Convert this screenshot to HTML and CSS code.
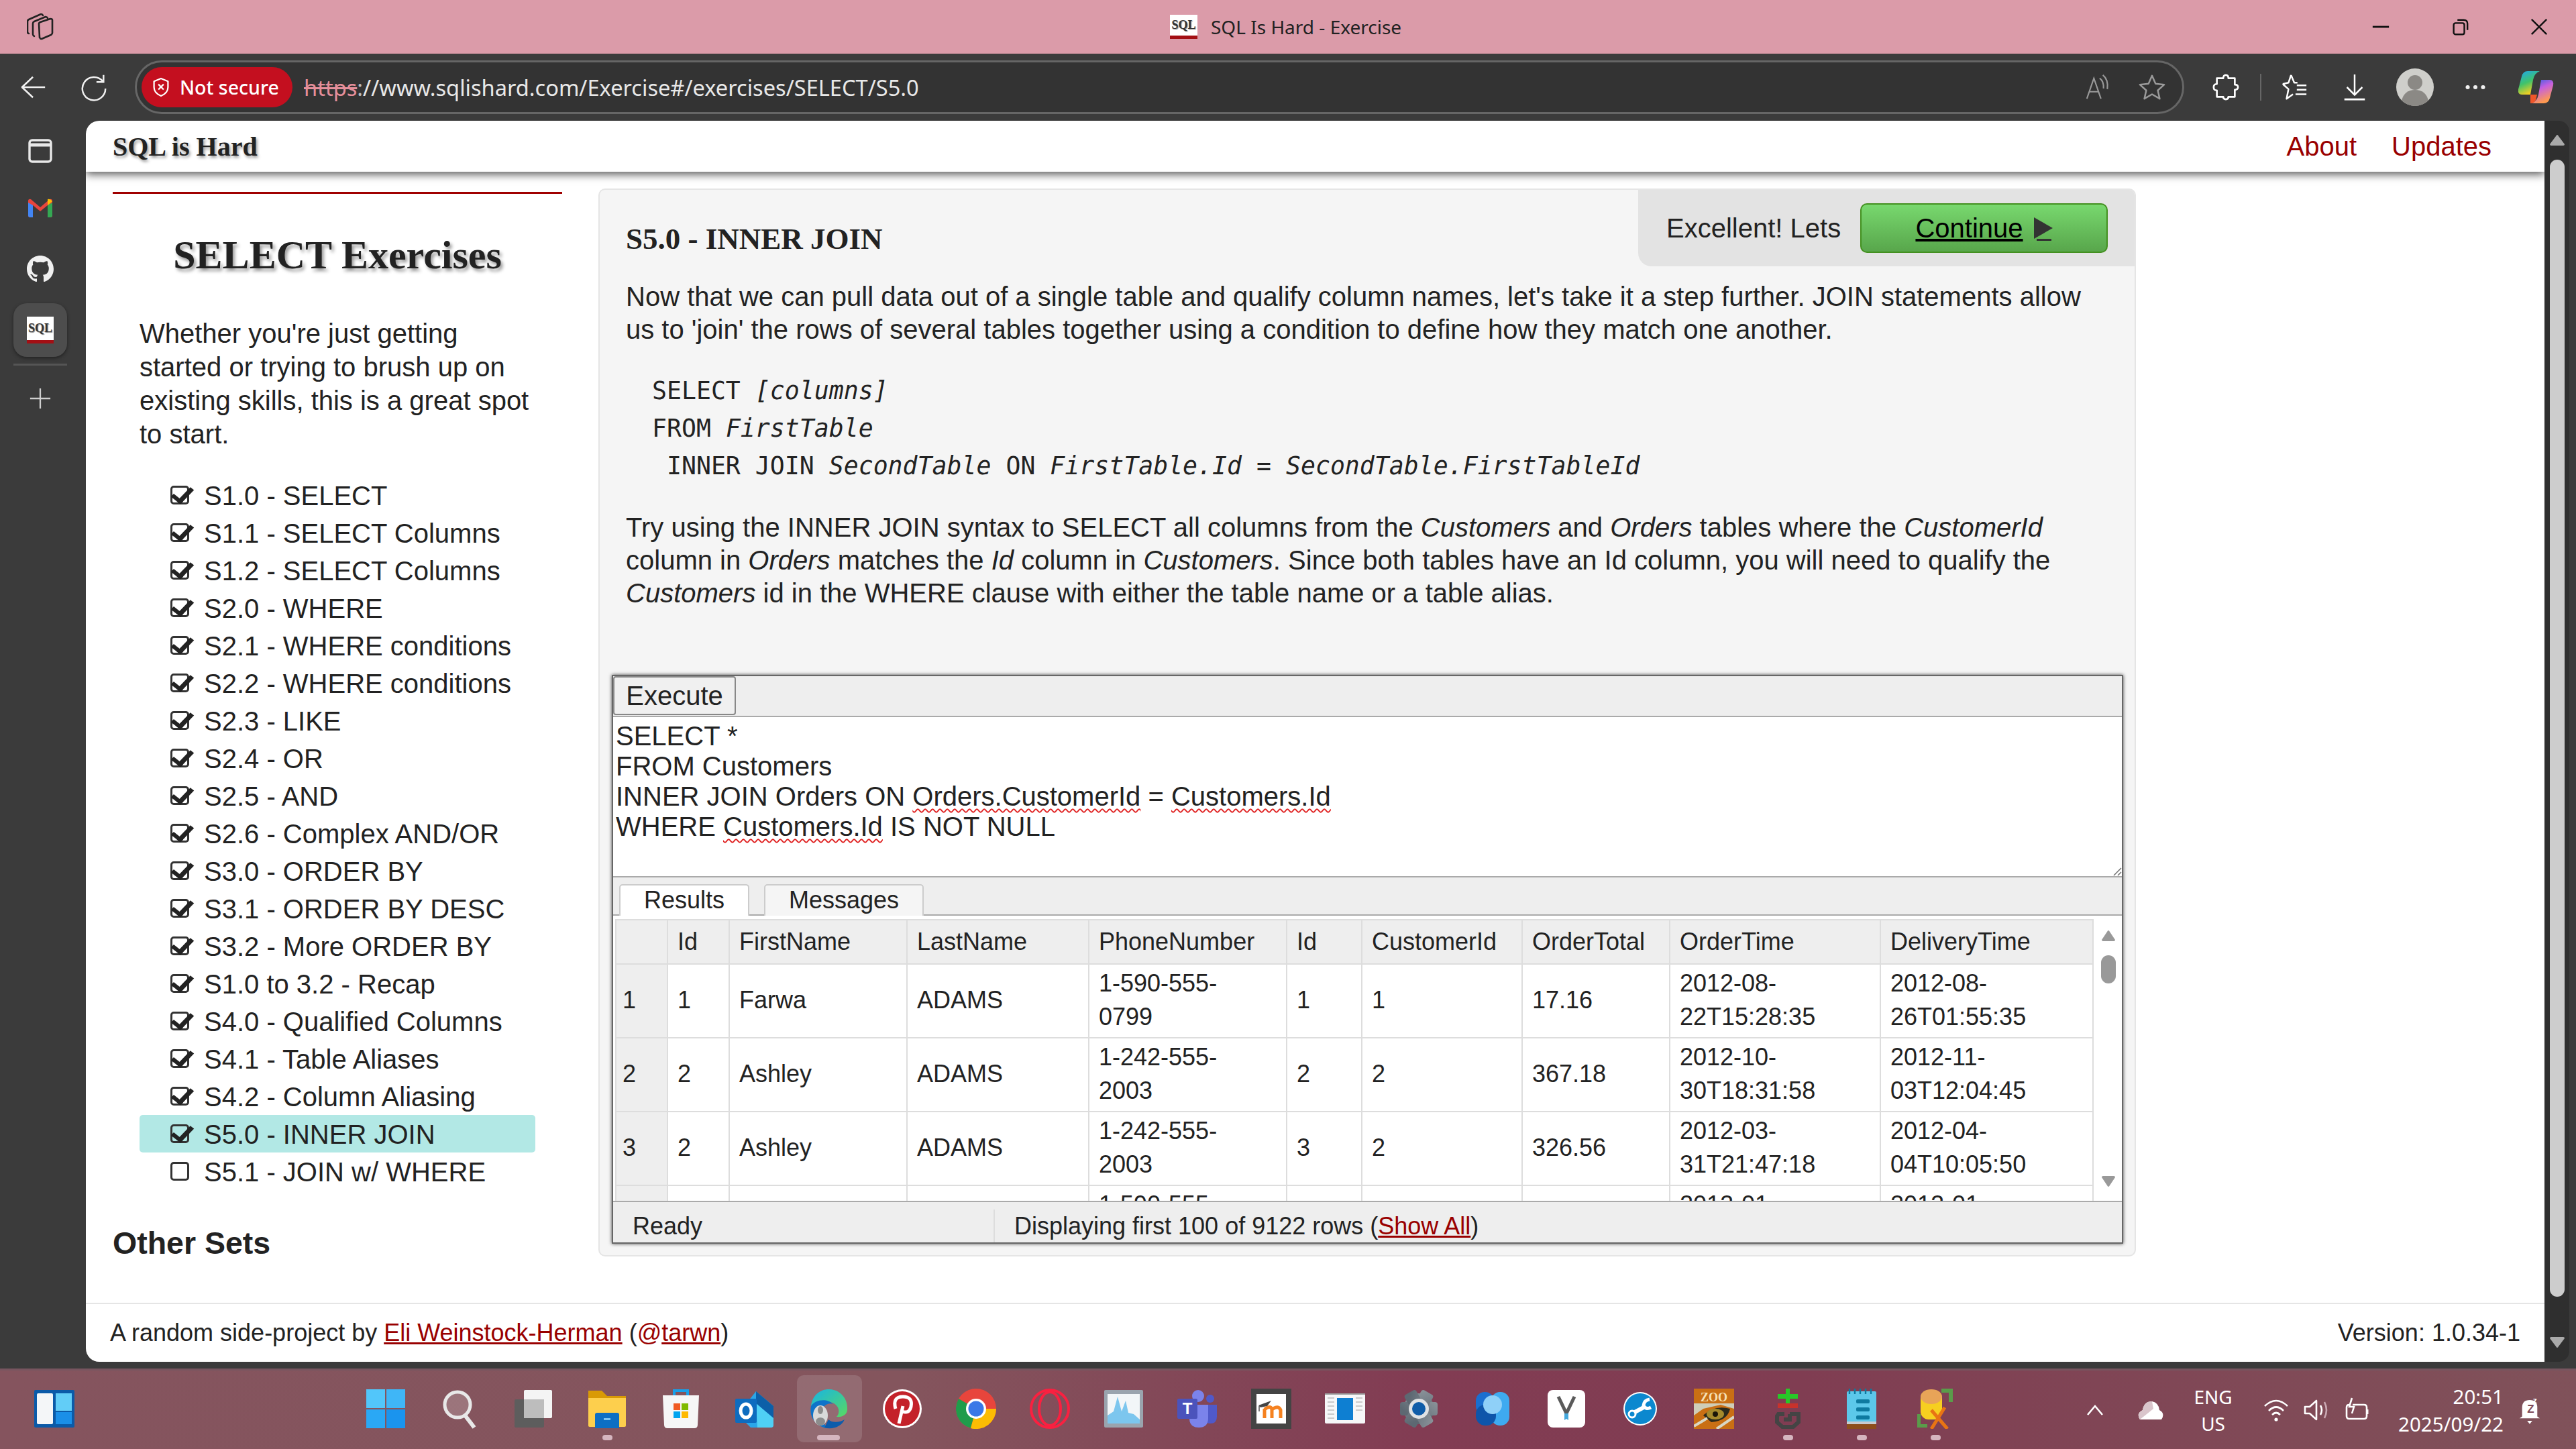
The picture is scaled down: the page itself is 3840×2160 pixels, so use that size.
FILE: index.html

```html
<!DOCTYPE html>
<html lang="en">
<head>
  <meta charset="UTF-8" />
  <title>SQL Is Hard - Exercise</title>
  <link rel="stylesheet" href="styles.css">
</head>
<body>
  <!-- browser title bar -->
  <div class="titlebar">
    <svg class="workspaces" viewBox="0 0 40 40" fill="none" stroke="#222" stroke-width="2.6" stroke-linejoin="round" stroke-linecap="round">
      <path d="M3 30 Q1 30 1 27 V12 Q1 10 3 9 L21 1 Q23 1 24 3"/>
      <path d="M11 34 Q9 33 9 31 V15 Q9 13 11 12 L28 5 Q30 5 31 7"/>
      <path d="M18 15 Q18 14 20 13 L35 8 Q38 8 38 10 V29 Q38 31 36 32 L22 38 Q20 38 19 36 Z"/>
    </svg>
    <div class="title-center">
      <div class="favicon"><span>SQL</span></div>
      <span class="title-text">SQL Is Hard - Exercise</span>
    </div>
    <div class="window-controls">
      <svg viewBox="0 0 30 30"><path d="M2 15 H28" stroke="#111" stroke-width="3"/></svg>
      <svg viewBox="0 0 30 30" fill="none" stroke="#111" stroke-width="2.6"><rect x="5" y="9" width="17" height="18" rx="3"/><path d="M11 4 H21 Q27 4 27 10 V20"/></svg>
      <svg viewBox="0 0 30 30"><path d="M3 3 L27 27 M27 3 L3 27" stroke="#111" stroke-width="2.6"/></svg>
    </div>
  </div>

  <!-- browser toolbar -->
  <div class="toolbar">
    <div class="tool">
      <svg viewBox="0 0 44 44" fill="none" stroke="#f0f0f0" stroke-width="2.6" stroke-linejoin="round"><path d="M40 22 H5 M21 6 L4 22 L21 38"/></svg>
    </div>
    <div class="tool">
      <svg viewBox="0 0 44 44" fill="none" stroke="#f0f0f0" stroke-width="2.6"><path d="M36 13 A18 18 0 1 0 40 24"/><path d="M37 3 V14 H26"/></svg>
    </div>
    <div class="address">
      <div class="not-secure">
        <svg viewBox="0 0 30 34" fill="none" stroke="#fff" stroke-width="2.6" stroke-linejoin="round"><path d="M15 2 L27 7 V17 Q27 27 15 32 Q3 27 3 17 V7 Z"/><path d="M10.5 12 L19.5 21 M19.5 12 L10.5 21"/></svg>
        <span>Not secure</span>
      </div>
      <div class="url"><s>https</s><span class="url-sep">:</span>//www.sqlishard.com/Exercise#/exercises/SELECT/S5.0</div>
      <div class="address-icons">
        <svg viewBox="0 0 44 44" fill="none" stroke="#9a9a9a" stroke-width="2.2"><path d="M4 40 L15 8 L26 40 M8 29 H22"/><path d="M24 8 Q31 13 30 24 M29 3 Q38 10 36 25"/></svg>
        <svg viewBox="0 0 44 44" fill="none" stroke="#9a9a9a" stroke-width="2.6" stroke-linejoin="round"><path d="M22 4 L27.5 16.5 L41 18 L31 27 L34 40 L22 33 L10 40 L13 27 L3 18 L16.5 16.5 Z"/></svg>
      </div>
    </div>
    <div class="tool">
      <svg viewBox="0 0 44 44" fill="none" stroke="#fff" stroke-width="2.8" stroke-linejoin="round"><path d="M18 8 Q18 3 22 3 Q26 3 26 8 H36 V18 Q41 18 41 22 Q41 26 36 26 V37 H26 Q26 41 22 41 Q18 41 18 37 H8 V27 Q3 27 3 22 Q3 17 8 17 V8 Z"/></svg>
    </div>
    <div class="tool-sep"></div>
    <div class="tool">
      <svg viewBox="0 0 44 44" fill="none" stroke="#fff" stroke-width="2.6" stroke-linejoin="round"><path d="M17 3 L22 15 L27 15 M4 17 L13 25 L10 40 L20 33"/><path d="M17 3 L13 15 L4 17"/><path d="M26 19 H41 M26 26 H41 M24 33 H41"/></svg>
    </div>
    <div class="tool">
      <svg viewBox="0 0 44 44" fill="none" stroke="#fff" stroke-width="2.6"><path d="M22 2 V34 M10 22 L22 34 L34 22"/><path d="M6 41 H38" stroke-width="3"/></svg>
    </div>
    <div class="tool">
      <svg class="avatar" viewBox="0 0 56 56"><circle cx="28" cy="28" r="28" fill="#cfcfcb"/><circle cx="28" cy="21" r="11" fill="#8b8985"/><path d="M8 48 Q12 32 28 32 Q44 32 48 48 Q38 56 28 56 Q18 56 8 48 Z" fill="#8b8985"/></svg>
    </div>
    <div class="tool">
      <svg viewBox="0 0 44 44" fill="#f0f0f0"><circle cx="10" cy="22" r="3.2"/><circle cx="22" cy="22" r="3.2"/><circle cx="34" cy="22" r="3.2"/></svg>
    </div>
    <div class="tool">
      <svg class="copilot" viewBox="0 0 56 50">
        <defs>
          <linearGradient id="copA" x1="0" y1="0" x2="0.4" y2="1"><stop offset="0" stop-color="#1fa6f0"/><stop offset="0.55" stop-color="#3fc36a"/><stop offset="1" stop-color="#f4d020"/></linearGradient>
          <linearGradient id="copB" x1="0" y1="0" x2="0.4" y2="1"><stop offset="0" stop-color="#2a5fe0"/><stop offset="0.45" stop-color="#c45fe0"/><stop offset="1" stop-color="#ff9a50"/></linearGradient>
        </defs>
        <path d="M16 1 H34 Q26 4 24 14 L20 36 H7 Q1 36 2 28 L7 9 Q9 1 16 1 Z" fill="url(#copA)"/>
        <path d="M40 49 H22 Q30 46 32 36 L36 14 H49 Q55 14 54 22 L49 41 Q47 49 40 49 Z" fill="url(#copB)"/>
        <path d="M20 36 H30 L28 44 Q26 49 20 49 Q20 42 20 36 Z" fill="#f0562a"/>
      </svg>
    </div>
  </div>

  <div class="workspace">
    <!-- browser vertical strip -->
    <div class="strip">
      <svg class="strip-icon strip-tabs" viewBox="0 0 36 36" fill="none" stroke="#e8e8e8" stroke-width="3.4"><rect x="2" y="2" width="32" height="32" rx="4"/><path d="M2 9 H34" stroke-width="5"/></svg>
      <svg class="strip-icon strip-gmail" viewBox="0 0 36 28">
        <path d="M0 4 Q0 0 4 1 L18 13 L18 19 L7 10 V28 H3 Q0 28 0 25 Z" fill="#e8453c"/>
        <path d="M36 4 Q36 0 32 1 L18 13 V19 L29 10 V28 H33 Q36 28 36 25 Z" fill="#e8453c"/>
        <path d="M0 6 V25 Q0 28 3 28 H7 V10 Z" fill="#4285f4"/>
        <path d="M36 6 V25 Q36 28 33 28 H29 V10 Z" fill="#34a853"/>
        <path d="M29 1 Q33 0 36 4 L29 10 Z" fill="#fbbc04"/>
      </svg>
      <svg class="strip-icon strip-github" viewBox="0 0 16 16"><path fill="#f0f0f0" d="M8 0C3.58 0 0 3.58 0 8c0 3.54 2.29 6.53 5.47 7.59.4.07.55-.17.55-.38 0-.19-.01-.82-.01-1.49-2.01.37-2.53-.49-2.69-.94-.09-.23-.48-.94-.82-1.13-.28-.15-.68-.52-.01-.53.63-.01 1.08.58 1.23.82.72 1.21 1.87.87 2.33.66.07-.52.28-.87.51-1.07-1.78-.2-3.64-.89-3.64-3.95 0-.87.31-1.59.82-2.15-.08-.2-.36-1.02.08-2.12 0 0 .67-.21 2.2.82.64-.18 1.32-.27 2-.27s1.36.09 2 .27c1.53-1.04 2.2-.82 2.2-.82.44 1.1.16 1.92.08 2.12.51.56.82 1.27.82 2.15 0 3.07-1.87 3.75-3.65 3.95.29.25.54.73.54 1.48 0 1.07-.01 1.93-.01 2.2 0 .21.15.46.55.38A8.01 8.01 0 0 0 16 8c0-4.42-3.58-8-8-8z"/></svg>
      <div class="strip-active"><div class="favicon favicon-large"><span>SQL</span></div></div>
      <div class="strip-line"></div>
      <svg class="strip-icon strip-plus" viewBox="0 0 36 36"><path d="M18 2 V34 M2 18 H34" stroke="#cfcfcf" stroke-width="2.4"/></svg>
    </div>

    <!-- the page itself -->
    <div class="page">
      <header class="page-header">
        <div class="brand">SQL is Hard</div>
        <nav class="nav">
          <a href="#">About</a>
          <a href="#">Updates</a>
        </nav>
      </header>

      <div class="layout">
        <aside class="side">
          <h2 class="side-title">SELECT Exercises</h2>
          <p class="side-text">Whether you're just getting started or trying to brush up on existing skills, this is a great spot to start.</p>
          <ul class="lessons">
            <li class="done">S1.0 - SELECT</li>
            <li class="done">S1.1 - SELECT Columns</li>
            <li class="done">S1.2 - SELECT Columns</li>
            <li class="done">S2.0 - WHERE</li>
            <li class="done">S2.1 - WHERE conditions</li>
            <li class="done">S2.2 - WHERE conditions</li>
            <li class="done">S2.3 - LIKE</li>
            <li class="done">S2.4 - OR</li>
            <li class="done">S2.5 - AND</li>
            <li class="done">S2.6 - Complex AND/OR</li>
            <li class="done">S3.0 - ORDER BY</li>
            <li class="done">S3.1 - ORDER BY DESC</li>
            <li class="done">S3.2 - More ORDER BY</li>
            <li class="done">S1.0 to 3.2 - Recap</li>
            <li class="done">S4.0 - Qualified Columns</li>
            <li class="done">S4.1 - Table Aliases</li>
            <li class="done">S4.2 - Column Aliasing</li>
            <li class="done current">S5.0 - INNER JOIN</li>
            <li>S5.1 - JOIN w/ WHERE</li>
          </ul>
          <h3 class="other-sets">Other Sets</h3>
        </aside>

        <main class="panel">
          <div class="next-box">
            <span class="next-text">Excellent! Lets</span>
            <a class="continue" href="#"><u>Continue</u> <span class="play"></span></a>
          </div>
          <h2 class="panel-title">S5.0 - INNER JOIN</h2>
          <p class="panel-text">Now that we can pull data out of a single table and qualify column names, let's take it a step further. JOIN statements allow us to 'join' the rows of several tables together using a condition to define how they match one another.</p>
          <pre class="code">SELECT <i>[columns]</i>
FROM <i>FirstTable</i>
 INNER JOIN <i>SecondTable</i> ON <i>FirstTable.Id</i> = <i>SecondTable.FirstTableId</i></pre>
          <p class="panel-text">Try using the INNER JOIN syntax to SELECT all columns from the <i>Customers</i> and <i>Orders</i> tables where the <i>CustomerId</i> column in <i>Orders</i> matches the <i>Id</i> column in <i>Customers</i>. Since both tables have an Id column, you will need to qualify the <i>Customers</i> id in the WHERE clause with either the table name or a table alias.</p>

          <div class="sql-box">
            <div class="sql-tools"><button class="execute">Execute</button></div>
            <div class="sql-editor">
              <div>SELECT *</div>
              <div>FROM Customers</div>
              <div>INNER JOIN Orders ON <span class="typo">Orders.CustomerId</span> = <span class="typo">Customers.Id</span></div>
              <div>WHERE <span class="typo">Customers.Id</span> IS NOT NULL</div>
              <svg class="resize" viewBox="0 0 14 14"><path d="M13 2 L2 13 M13 8 L8 13" stroke="#777" stroke-width="1.6"/></svg>
            </div>
            <div class="tabs">
              <div class="tab tab-active">Results</div>
              <div class="tab">Messages</div>
            </div>
            <div class="results">
              <table class="grid">
                <colgroup>
                  <col class="c-num"><col class="c-id"><col class="c-first"><col class="c-last"><col class="c-phone"><col class="c-oid"><col class="c-cust"><col class="c-total"><col class="c-otime"><col class="c-dtime">
                </colgroup>
                <thead>
                  <tr><th></th><th>Id</th><th>FirstName</th><th>LastName</th><th>PhoneNumber</th><th>Id</th><th>CustomerId</th><th>OrderTotal</th><th>OrderTime</th><th>DeliveryTime</th></tr>
                </thead>
                <tbody>
                  <tr><th>1</th><td>1</td><td>Farwa</td><td>ADAMS</td><td>1-590-555-<br>0799</td><td>1</td><td>1</td><td>17.16</td><td>2012-08-<br>22T15:28:35</td><td>2012-08-<br>26T01:55:35</td></tr>
                  <tr><th>2</th><td>2</td><td>Ashley</td><td>ADAMS</td><td>1-242-555-<br>2003</td><td>2</td><td>2</td><td>367.18</td><td>2012-10-<br>30T18:31:58</td><td>2012-11-<br>03T12:04:45</td></tr>
                  <tr><th>3</th><td>2</td><td>Ashley</td><td>ADAMS</td><td>1-242-555-<br>2003</td><td>3</td><td>2</td><td>326.56</td><td>2012-03-<br>31T21:47:18</td><td>2012-04-<br>04T10:05:50</td></tr>
                  <tr><th></th><td></td><td></td><td></td><td>1-590-555-<br>&nbsp;</td><td></td><td></td><td></td><td>2012-01-<br>&nbsp;</td><td>2012-01-<br>&nbsp;</td></tr>
                </tbody>
              </table>
              <div class="mini-scroll">
                <svg class="mini-arrow" viewBox="0 0 22 18"><path d="M11 1 Q12 1 13 3 L21 15 Q21 17 19 17 H3 Q1 17 1 15 L9 3 Q10 1 11 1 Z" fill="#999"/></svg>
                <div class="mini-thumb"></div>
                <svg class="mini-arrow mini-down" viewBox="0 0 22 18"><path d="M11 17 Q12 17 13 15 L21 3 Q21 1 19 1 H3 Q1 1 1 3 L9 15 Q10 17 11 17 Z" fill="#999"/></svg>
              </div>
            </div>
            <div class="status">
              <div class="status-left">Ready</div>
              <div class="status-right">Displaying first 100 of 9122 rows (<a href="#">Show All</a>)</div>
            </div>
          </div>
        </main>
      </div>

      <footer class="page-footer">
        <div>A random side-project by <a href="#">Eli Weinstock-Herman</a> (<a class="at" href="#"><span>@</span>tarwn</a>)</div>
        <div>Version: 1.0.34-1</div>
      </footer>
    </div>

    <!-- page scrollbar -->
    <div class="scrollbar">
      <svg class="scroll-arrow" viewBox="0 0 24 18"><path d="M12 1 Q13 1 14 3 L23 15 Q23 17 21 17 H3 Q1 17 1 15 L10 3 Q11 1 12 1 Z" fill="#aaa"/></svg>
      <div class="scroll-thumb"></div>
      <svg class="scroll-arrow scroll-down" viewBox="0 0 24 18"><path d="M12 17 Q13 17 14 15 L23 3 Q23 1 21 1 H3 Q1 1 1 3 L10 15 Q11 17 12 17 Z" fill="#aaa"/></svg>
    </div>
  </div>

  <!-- windows taskbar -->
  <div class="taskbar">
    <div class="task task-widgets">
      <svg viewBox="0 0 60 56"><rect width="60" height="56" rx="2" fill="#0b5aa8"/><rect x="4" y="5" width="24" height="46" rx="2" fill="#f4f6f8"/><rect x="32" y="5" width="24" height="26" fill="#62cdf7"/><rect x="32" y="33" width="24" height="18" fill="#1a8fe8"/></svg>
    </div>
    <div class="task-group">
      <div class="task"><svg viewBox="0 0 60 60"><rect x="1" y="1" width="28" height="28" fill="#52c6fa"/><rect x="31" y="1" width="28" height="28" fill="#3fb6f7"/><rect x="1" y="31" width="28" height="28" fill="#2aa8f5"/><rect x="31" y="31" width="28" height="28" fill="#1a94ee"/></svg></div>
      <div class="task"><svg viewBox="0 0 60 60"><circle cx="27" cy="24" r="19" fill="#ffffff30" stroke="#e8e8e8" stroke-width="5"/><path d="M39 41 L52 58" stroke="#e8e8e8" stroke-width="6"/></svg></div>
      <div class="task"><svg viewBox="0 0 60 60"><rect x="2" y="16" width="44" height="42" rx="2" fill="#5d5d5d"/><rect x="16" y="2" width="42" height="42" rx="2" fill="#f4f4f4"/><rect x="16" y="16" width="30" height="28" fill="#bdbdbd"/></svg></div>
      <div class="task running"><svg viewBox="0 0 60 60"><path d="M2 3 H22 L30 11 H58 V56 H2 Z" fill="#d99a05"/><path d="M2 14 H58 V55 Q58 57 56 57 H4 Q2 57 2 55 Z" fill="#fdcf4d"/><path d="M12 39 Q12 36 15 36 H45 Q48 36 48 39 V59 H12 Z" fill="#0d6fc4"/><rect x="25" y="44" width="10" height="3" fill="#7cc4f2"/></svg></div>
      <div class="task"><svg viewBox="0 0 60 60"><path d="M20 12 V3 H40 V12" fill="none" stroke="#18a0ea" stroke-width="4"/><path d="M3 10 H57 L55 54 Q55 59 50 59 H10 Q5 59 5 54 Z" fill="#f6f6f6"/><rect x="19" y="22" width="10" height="10" fill="#f05a22"/><rect x="31" y="22" width="10" height="10" fill="#7fba00"/><rect x="19" y="34" width="10" height="10" fill="#00a4ef"/><rect x="31" y="34" width="10" height="10" fill="#ffb900"/></svg></div>
      <div class="task"><svg viewBox="0 0 60 60"><path d="M32 4 L58 26 V54 Q58 58 54 58 H24 L16 50 V24 Z" fill="#2aa6e8"/><path d="M32 4 L58 26 V44 L32 22 Z" fill="#0c5fa8"/><path d="M32 22 L58 44 V54 Q58 58 54 58 H34 Z" fill="#4fd0f5"/><rect x="1" y="15" width="32" height="36" rx="2" fill="#0e6cbf"/><ellipse cx="17" cy="33" rx="8" ry="10" fill="none" stroke="#fff" stroke-width="5"/></svg></div>
      <div class="task task-active running-wide"><svg viewBox="0 0 60 60">
        <defs><linearGradient id="edgeA" x1="0.2" y1="0" x2="1" y2="0.8"><stop offset="0" stop-color="#1db8d8"/><stop offset="1" stop-color="#52d66e"/></linearGradient></defs>
        <path d="M4 26 C6 8 20 0 32 1 C48 2 59 15 58 31 C58 39 50 43 42 42 C48 36 46 25 36 21 C22 16 8 20 4 26 Z" fill="url(#edgeA)"/>
        <path d="M4 26 C10 16 28 14 37 23 C28 20 18 28 18 39 C18 48 24 56 33 59 C16 60 0 46 4 26 Z" fill="#0e73c9"/>
        <path d="M24 58 C36 62 50 56 54 46 C48 50 36 52 30 46 Z" fill="#0d5cab"/>
        <ellipse cx="18" cy="40" rx="11" ry="15" fill="#d9d9d9"/><ellipse cx="18" cy="32" rx="4" ry="6" fill="#8c8c8c"/><ellipse cx="18" cy="49" rx="7" ry="6" fill="#8c8c8c"/>
      </svg></div>
      <div class="task"><svg viewBox="0 0 60 60"><circle cx="30" cy="30" r="29" fill="#fff"/><circle cx="30" cy="30" r="26" fill="#c4222a"/><path d="M25 52 L31 26 M20 30 Q15 12 31 12 Q46 12 43 27 Q40 38 30 34" fill="none" stroke="#fff" stroke-width="5"/></svg></div>
      <div class="task"><svg viewBox="0 0 60 60"><circle cx="30" cy="30" r="30" fill="#e8453c"/><path d="M30 30 L4 15 A30 30 0 0 0 22 59 Z" fill="#1f9c4b"/><path d="M30 30 H60 A30 30 0 0 1 22 59 Z" fill="#fbbc04"/><circle cx="30" cy="30" r="15" fill="#fff"/><circle cx="30" cy="30" r="11.5" fill="#3a78e7"/></svg></div>
      <div class="task"><svg viewBox="0 0 60 60" fill="none" stroke="#fa2040" stroke-width="4"><ellipse cx="30" cy="30" rx="28" ry="28"/><ellipse cx="30" cy="30" rx="16" ry="25"/></svg></div>
      <div class="task"><svg viewBox="0 0 60 60"><rect x="1" y="2" width="58" height="56" rx="2" fill="#9aa4ae"/><rect x="6" y="8" width="48" height="44" fill="#f2f6f8"/><path d="M6 52 V40 L15 34 L21 12 L27 34 L33 18 L37 36 L45 38 L54 46 V52 Z" fill="#7cc6ee"/></svg></div>
      <!-- teams -->
      <div class="task"><svg viewBox="0 0 60 60"><circle cx="31" cy="11" r="9" fill="#7b83eb"/><circle cx="49" cy="15" r="6" fill="#5059c9"/><path d="M40 24 H59 V42 Q59 52 49 52 Q40 52 40 42 Z" fill="#5059c9"/><path d="M18 24 H46 V44 Q46 58 32 58 Q18 58 18 44 Z" fill="#7b83eb"/><rect y="15" width="30" height="30" rx="2" fill="#4b53bc"/><text class="teams-t" x="15" y="38">T</text></svg></div>
      <!-- moodle style tile -->
      <div class="task"><svg viewBox="0 0 60 60"><rect width="60" height="60" fill="#444"/><rect x="8" y="8" width="44" height="44" fill="#fff"/><path d="M20 44 V30 M20 31 Q29 24 31 31 V44 M31 31 Q41 24 44 32 V44" fill="none" stroke="#f58220" stroke-width="5"/><path d="M11 25 L30 18 L24 26 L14 28 Z" fill="#444"/><path d="M12 26 V34" stroke="#444" stroke-width="1.4"/></svg></div>
      <!-- blue window -->
      <div class="task"><svg viewBox="0 0 60 60"><rect y="7" width="60" height="45" rx="2" fill="#f6f7f8"/><rect y="7" width="60" height="2" fill="#9a9a9a"/><rect x="18" y="14" width="24" height="33" fill="#0e7fd2"/><path d="M4 14 H14 M4 20 H14 M4 26 H14 M4 32 H14 M4 38 H14 M4 44 H14 M46 14 H56 M46 20 H56 M46 26 H56 M46 32 H56" stroke="#bcbcbc" stroke-width="1.4"/></svg></div>
      <!-- settings gear -->
      <div class="task"><svg viewBox="0 0 60 60">
        <defs><linearGradient id="gearG" x1="0" y1="0" x2="0.4" y2="1"><stop offset="0" stop-color="#8b939a"/><stop offset="1" stop-color="#5d6872"/></linearGradient></defs>
        <g fill="url(#gearG)"><circle cx="30" cy="30" r="23"/><rect x="20" y="2" width="20" height="56" rx="4" transform="rotate(90 30 30)"/><rect x="20" y="2" width="20" height="56" rx="4" transform="rotate(30 30 30)"/><rect x="20" y="2" width="20" height="56" rx="4" transform="rotate(150 30 30)"/></g>
        <circle cx="30" cy="30" r="15" fill="#e0e2e4"/><circle cx="30" cy="30" r="10" fill="#0f5ca8"/>
      </svg></div>
      <!-- blue lobes -->
      <div class="task"><svg viewBox="0 0 60 60"><rect x="5" y="5" width="27" height="34" rx="13" fill="#1a6fd0"/><rect x="28" y="5" width="27" height="50" rx="13" fill="#3eaaf0"/><rect x="5" y="24" width="30" height="31" rx="14" fill="#0e55aa"/><circle cx="30" cy="24" r="14" fill="#8fd0f8"/></svg></div>
      <!-- V tile -->
      <div class="task"><svg viewBox="0 0 60 60"><rect x="2" y="2" width="56" height="56" rx="8" fill="#fff"/><path d="M18 12 L30 37 L42 12" fill="none" stroke="#5a5a5a" stroke-width="5"/><path d="M27 37 H33 V47 L30 45 L27 47 Z" fill="#45a8dc"/></svg></div>
      <!-- wrench -->
      <div class="task"><svg viewBox="0 0 60 60"><circle cx="30" cy="30" r="25" fill="#fff"/><circle cx="30" cy="30" r="23" fill="#0b88cf"/><circle cx="18" cy="38" r="5" fill="none" stroke="#fff" stroke-width="3"/><path d="M22 35 L37 27" stroke="#fff" stroke-width="6"/><path d="M44 16 Q36 17 35 25 Q38 32 46 28" fill="none" stroke="#fff" stroke-width="5"/></svg></div>
      <!-- zoo -->
      <div class="task"><svg viewBox="0 0 60 60"><rect width="60" height="60" fill="#c96f14"/><path d="M0 22 H60 V30 L40 24 L14 30 L0 40 Z" fill="#cfcdb8"/><path d="M14 40 Q30 24 54 30 Q50 48 26 50 Z" fill="#2b2a1c"/><ellipse cx="32" cy="38" rx="13" ry="8" fill="#a58a2c"/><circle cx="32" cy="38" r="4" fill="#1a1608"/><path d="M0 56 L20 44 M34 60 L60 42" stroke="#d8d6c4" stroke-width="4"/><text class="zoo" x="30" y="19">ZOO</text></svg></div>
      <!-- stock tool -->
      <div class="task running"><svg viewBox="0 0 60 60"><path d="M27 0 H33 V8 H45 V15 H33 V23 H27 V15 H15 V8 H27 Z" fill="#28c828"/><rect x="15" y="22" width="30" height="7" fill="#c8322c"/><path d="M25 38 H16 L14 41 V50 L22 57 H38 L46 50 V38 H33 M33 38 V46 H24" fill="none" stroke="#444" stroke-width="6"/></svg></div>
      <div class="task running"><svg viewBox="0 0 60 60"><rect x="8" y="4" width="44" height="48" rx="2" fill="#5cc8ea"/><path d="M12 0 V8 M20 0 V8 M28 0 V8 M36 0 V8 M44 0 V8" stroke="#0e7aa0" stroke-width="2.4"/><rect x="22" y="16" width="20" height="6" rx="2" fill="#0e7aa0"/><rect x="22" y="28" width="20" height="6" rx="2" fill="#0e7aa0"/><rect x="22" y="40" width="20" height="6" rx="2" fill="#0e7aa0"/><rect x="8" y="49" width="44" height="4" fill="#c8ccd0"/><rect x="8" y="53" width="44" height="7" fill="#8d4f1c"/></svg></div>
      <div class="task running"><svg viewBox="0 0 60 60"><path d="M39 0 H56 V20 H50 V6 H39 Z" fill="#5a9c4a"/><path d="M3 58 V38 H8 V53 H18 V58 Z" fill="#5a9c4a"/><rect x="8" y="2" width="32" height="44" rx="12" fill="#f6cf20"/><ellipse cx="24" cy="12" rx="16" ry="11" fill="#e8a458"/><path d="M24 32 L48 60 M44 28 L24 60" stroke="#e87414" stroke-width="5" fill="none"/></svg></div>
    </div>
    <div class="tray">
      <svg class="tray-chevron" viewBox="0 0 28 18"><path d="M3 16 L14 3 L25 16" fill="none" stroke="#fff" stroke-width="2.6"/></svg>
      <svg class="tray-cloud" viewBox="0 0 40 30"><path d="M4 29 Q-2 20 8 15 Q10 2 22 2 Q32 4 33 15 Q42 20 36 29 Z" fill="#fff"/><path d="M8 15 Q10 2 22 2 L24 13 L4 29 Q-2 20 8 15 Z" fill="#d9c5cb"/></svg>
      <div class="tray-lang"><span>ENG</span><span>US</span></div>
      <div class="tray-icon"><svg viewBox="0 0 40 40" fill="none" stroke="#fff" stroke-width="2.6"><path d="M3 14 Q20 -2 37 14 M9 21 Q20 10 31 21 M14 27 Q20 21 26 27"/><circle cx="20" cy="34" r="2.6" fill="#fff" stroke="none"/></svg></div>
      <div class="tray-icon"><svg viewBox="0 0 40 40" fill="none" stroke="#fff" stroke-width="2.6" stroke-linejoin="round"><path d="M3 15 H10 L20 6 V34 L10 25 H3 Z"/><path d="M26 13 Q30 20 26 27"/><path d="M32 8 Q38 20 32 32" stroke="#c9a8b2"/></svg></div>
      <div class="tray-icon"><svg viewBox="0 0 40 40" fill="none" stroke="#fff" stroke-width="2.6"><path d="M14 12 H31 Q35 12 35 16 V29 Q35 33 31 33 H9 Q5 33 5 29 V16 Q5 12 9 12"/><path d="M36 19 V26" stroke-width="3"/><path d="M13 2 L9 15 H16 L13 25"/></svg></div>
      <div class="clock"><span>20:51</span><span>2025/09/22</span></div>
      <div class="bell"><svg viewBox="0 0 34 46"><path d="M5 33 V19 Q5 7 17 7 Q29 7 29 19 V33 L33 36 H1 Z" fill="#fff"/><path d="M13 40 H21 L17 45 Z" fill="#fff"/><text class="bell-z" x="13" y="27">Z</text><text class="bell-z2" x="22" y="12">z</text></svg></div>
    </div>
  </div>
</body>
</html>
```

FILE: styles.css

```css
/* Colours */
:root {
  --title-pink: #db9ba9;
  --chrome: #3b3b3b;
  --text: #222222;
  --link: #990000;
  --line: #dddddd;
  --pane: #eeeeee;
}

html, body {
  margin: 0;
  width: 3840px;
  height: 2160px;
  overflow: hidden;
}

body {
  display: flex;
  flex-direction: column;
  background: var(--chrome);
  color: var(--text);
  font-family: "Liberation Sans", Arial, sans-serif;
  font-size: 40px;
}

a { color: var(--link); }

/* Title bar */
.titlebar {
  position: relative;
  display: flex;
  align-items: center;
  height: 80px;
  flex: none;
  background: var(--title-pink);
}

.workspaces {
  width: 40px;
  height: 40px;
  margin-left: 40px;
}

.title-center {
  display: flex;
  align-items: center;
  gap: 20px;
  margin-left: 1664px;
}

.title-text {
  font-family: "Noto Sans", sans-serif;
  font-size: 28px;
  color: #222;
}

.favicon {
  width: 41px;
  height: 36px;
  background: #fff;
  border-bottom: 5px solid #a30f14;
  display: flex;
  align-items: center;
  justify-content: center;
  box-sizing: border-box;
}

.favicon span {
  font-family: "Liberation Serif", serif;
  font-weight: bold;
  font-size: 18px;
  color: #333;
  text-shadow: 1px 1px 1px #888;
}

.favicon-large {
  width: 40px;
  height: 40px;
}

.window-controls {
  display: flex;
  gap: 90px;
  margin-left: auto;
  margin-right: 41px;
}

.window-controls svg {
  width: 28px;
  height: 28px;
}

/* Toolbar */
.toolbar {
  display: flex;
  align-items: center;
  height: 100px;
  flex: none;
  padding-left: 5px;
  background: var(--chrome);
}

.tool {
  width: 90px;
  height: 60px;
  flex: none;
  display: flex;
  align-items: center;
  justify-content: center;
}

.tool svg {
  width: 42px;
  height: 42px;
}

.tool .avatar {
  width: 56px;
  height: 56px;
}

.tool .copilot {
  width: 56px;
  height: 50px;
}

.tool-sep {
  width: 2px;
  height: 40px;
  margin: 0 4px 0 6px;
  background: #666;
}

.address {
  display: flex;
  align-items: center;
  box-sizing: border-box;
  width: 3055px;
  height: 80px;
  margin: 0 17px 0 16px;
  padding-left: 7px;
  background: #333;
  border: 3px solid #666;
  border-radius: 40px;
}

.not-secure {
  display: flex;
  align-items: center;
  gap: 15px;
  width: 225px;
  height: 60px;
  box-sizing: border-box;
  padding-left: 16px;
  background: #c40f1f;
  border-radius: 30px;
  color: #fff;
  font-family: "Noto Sans", sans-serif;
  font-size: 28.5px;
  font-weight: 500;
  white-space: nowrap;
}

.not-secure svg {
  width: 26px;
  height: 32px;
}

.url {
  margin-left: 17px;
  font-family: "Noto Sans", sans-serif;
  font-size: 32.6px;
  color: #e8e8e8;
}

.url s {
  color: #e58f9b;
}

.url-sep {
  color: #bbb;
}

.address-icons {
  display: flex;
  gap: 38px;
  margin-left: auto;
  margin-right: 24px;
}

.address-icons svg {
  width: 42px;
  height: 42px;
}

/* Everything between the toolbar and the taskbar */
.workspace {
  flex: 1;
  display: flex;
  min-height: 0;
  padding-bottom: 10px;
}

.strip {
  width: 128px;
  flex: none;
  display: flex;
  flex-direction: column;
  align-items: center;
  padding-right: 8px;
  box-sizing: border-box;
}

.strip-icon {
  flex: none;
}

.strip-tabs {
  width: 36px;
  height: 36px;
  margin-top: 27px;
}

.strip-gmail {
  width: 36px;
  height: 28px;
  margin-top: 53px;
}

.strip-github {
  width: 40px;
  height: 40px;
  margin-top: 57px;
}

.strip-active {
  width: 80px;
  height: 80px;
  margin-top: 31px;
  flex: none;
  display: flex;
  align-items: center;
  justify-content: center;
  background: #4d4d4d;
  border-radius: 20px;
  box-shadow: 0 2px 5px #222;
}

.strip-line {
  width: 80px;
  height: 3px;
  margin-top: 10px;
  background: #555;
}

.strip-plus {
  width: 34px;
  height: 34px;
  margin-top: 32px;
}

/* Page */
.page {
  width: 3665px;
  flex: none;
  display: flex;
  flex-direction: column;
  background: #fff;
  border-radius: 20px 0 0 20px;
  overflow: hidden;
}

.page-header {
  position: relative;
  display: flex;
  align-items: center;
  justify-content: space-between;
  height: 76px;
  flex: none;
  padding: 0 79px 0 40px;
  box-shadow: 0 4px 12px rgba(0, 0, 0, 0.65);
}

.brand {
  font-family: "Liberation Serif", serif;
  font-weight: bold;
  font-size: 40px;
  text-shadow: 2px 3px 4px #999;
}

.nav {
  display: flex;
  gap: 52px;
}

.nav a {
  text-decoration: none;
}

.layout {
  flex: 1;
  min-height: 0;
  display: flex;
  align-items: flex-start;
  gap: 54px;
  padding: 25px 0 0 40px;
}

/* Left column */
.side {
  width: 670px;
  flex: none;
  margin-top: 5px;
  border-top: 3px solid #a00000;
}

.side-title {
  margin: 56px 0 0;
  font-family: "Liberation Serif", serif;
  font-size: 60px;
  line-height: 70px;
  text-align: center;
  text-shadow: 3px 4px 5px #999;
}

.side-text {
  width: 590px;
  margin: 57px 0 0 40px;
  line-height: 50px;
}

.lessons {
  margin: 38px 0 0 40px;
  padding: 0;
  width: 590px;
  list-style: none;
}

.lessons li {
  position: relative;
  height: 56px;
  line-height: 59px;
  padding-left: 96px;
  border-radius: 5px;
}

.lessons li::before {
  content: "";
  position: absolute;
  left: 46px;
  top: 14px;
  width: 28px;
  height: 28px;
  box-sizing: border-box;
  border: 3px solid #333;
  border-radius: 5px;
}

/* tick drawn from two borders */
.lessons li.done::after {
  content: "";
  position: absolute;
  left: 55px;
  top: 11px;
  width: 11px;
  height: 23px;
  border-right: 7px solid #222;
  border-bottom: 6px solid #222;
  transform: rotate(38deg) skewX(-6deg);
}

.lessons li.current {
  background: #b2e8e5;
}

.other-sets {
  margin: 49px 0 0;
  font-size: 46.5px;
  line-height: 60px;
}

/* Main panel */
.panel {
  position: relative;
  width: 2292px;
  height: 1592px;
  flex: none;
  box-sizing: border-box;
  padding: 45px 40px 0 39px;
  background: #f5f5f5;
  border: 2px solid #e5e5e5;
  border-radius: 10px;
}

.next-box {
  position: absolute;
  top: 0;
  right: 0;
  display: flex;
  align-items: center;
  justify-content: space-between;
  box-sizing: border-box;
  width: 740px;
  height: 114px;
  padding: 0 40px 0 42px;
  background: #e3e3e3;
  border-radius: 0 8px 0 20px;
}

.next-text {
  white-space: nowrap;
}

.continue {
  display: flex;
  align-items: center;
  justify-content: center;
  gap: 16px;
  width: 369px;
  height: 74px;
  flex: none;
  box-sizing: border-box;
  background: linear-gradient(#78d86e, #58a64b);
  border: 2px solid #43901f;
  border-radius: 10px;
  color: #000;
  text-decoration: none;
}

.play {
  position: relative;
  width: 0;
  height: 0;
  border-left: 28px solid #333;
  border-top: 16px solid transparent;
  border-bottom: 16px solid transparent;
}

.play::after {
  content: "";
  position: absolute;
  left: -24px;
  top: 16px;
  width: 22px;
  height: 3px;
  background: #333;
}

.panel-title {
  margin: 0;
  font-family: "Liberation Serif", serif;
  font-size: 45px;
  line-height: 56px;
}

.panel-text {
  margin: 34px 0 0;
  line-height: 49px;
}

.code {
  margin: 39px 0 0 39px;
  font-family: "DejaVu Sans Mono", monospace;
  font-size: 36.5px;
  line-height: 56px;
}

.code + .panel-text {
  margin-top: 39px;
}

/* SQL box */
.sql-box {
  display: flex;
  flex-direction: column;
  box-sizing: border-box;
  width: 2253px;
  height: 848px;
  margin: 97px 0 0 -21px;
  border: 2px solid #666;
  box-shadow: 0 0 5px #444;
  background: #fff;
}

.sql-tools {
  height: 61px;
  flex: none;
  box-sizing: border-box;
  border-bottom: 2px solid #aaa;
  background: var(--pane);
}

.execute {
  display: block;
  width: 183px;
  height: 58px;
  padding: 0;
  border: 2px solid #888;
  border-radius: 4px;
  background: #f0f0f0;
  color: var(--text);
  font-family: inherit;
  font-size: 40px;
}

.sql-editor {
  position: relative;
  height: 237px;
  flex: none;
  box-sizing: border-box;
  padding: 6px 0 0 4px;
  line-height: 45px;
  background: #fff;
}

.typo {
  text-decoration: underline wavy #e02020 2px;
  text-underline-offset: 4px;
}

.resize {
  position: absolute;
  right: 0;
  bottom: 0;
  width: 14px;
  height: 14px;
}

.tabs {
  display: flex;
  gap: 22px;
  height: 59px;
  flex: none;
  box-sizing: border-box;
  padding: 10px 0 0 9px;
  font-size: 36px;
  background: var(--pane);
  border-top: 2px solid #aaa;
  border-bottom: 2px solid #aaa;
}

.tab {
  box-sizing: border-box;
  height: 47px;
  line-height: 43px;
  padding: 0 35px;
  background: #f5f5f5;
  border: 2px solid #ccc;
  border-bottom: 0;
  border-radius: 5px 5px 0 0;
}

.tab-active {
  height: 53px;
  background: #fff;
}

.results {
  position: relative;
  flex: 1;
  min-height: 0;
  overflow: hidden;
  padding: 5px 0 0 3px;
  background: #fff;
}

.grid {
  width: 2202px;
  table-layout: fixed;
  border-collapse: collapse;
  font-size: 36px;
  line-height: 50px;
}

.grid th,
.grid td {
  height: 110px;
  box-sizing: border-box;
  padding: 0 8px 0 14px;
  border: 2px solid var(--line);
  font-weight: normal;
  text-align: left;
}

.grid td {
  padding-bottom: 2px;
}

.grid thead th {
  height: 66px;
  background: var(--pane);
}

.grid tbody th {
  padding-left: 9px;
  padding-bottom: 2px;
  background: var(--pane);
}

.c-num { width: 77px; }
.c-id { width: 92px; }
.c-first { width: 265px; }
.c-last { width: 271px; }
.c-phone { width: 295px; }
.c-oid { width: 112px; }
.c-cust { width: 239px; }
.c-total { width: 220px; }
.c-otime { width: 314px; }
.c-dtime { width: 317px; }

.mini-scroll {
  position: absolute;
  top: 21px;
  left: 2218px;
  width: 22px;
  height: 384px;
}

.mini-arrow {
  display: block;
  width: 22px;
  height: 18px;
}

.mini-thumb {
  width: 22px;
  height: 42px;
  margin-top: 20px;
  background: #999;
  border-radius: 11px;
}

.mini-down {
  position: absolute;
  left: 0;
  bottom: 0;
}

.status {
  display: flex;
  align-items: flex-end;
  height: 62px;
  flex: none;
  box-sizing: border-box;
  border-top: 2px solid #aaa;
  background: var(--pane);
  font-size: 36px;
  line-height: 49px;
}

.status-left {
  width: 569px;
  box-sizing: border-box;
  padding-left: 29px;
  border-right: 2px solid #ddd;
}

.status-right {
  padding-left: 29px;
}

/* Footer */
.page-footer {
  display: flex;
  align-items: center;
  justify-content: space-between;
  height: 88px;
  flex: none;
  box-sizing: border-box;
  padding: 0 36px 0 36px;
  border-top: 2px solid #e5e5e5;
  font-size: 36px;
}

.at span {
  display: inline-block;
}

/* Page scrollbar */
.scrollbar {
  width: 37px;
  flex: none;
  display: flex;
  flex-direction: column;
  align-items: center;
  background: #2f2f2f;
  border-radius: 0 16px 16px 0;
}

.scroll-arrow {
  width: 24px;
  height: 18px;
  flex: none;
  margin: 20px 0;
}

.scroll-thumb {
  height: 1695px;
  flex: none;
  width: 22px;
  background: #cdcdcd;
  border-radius: 11px;
}

.scroll-down {
  margin-top: auto;
}

/* Taskbar */
.taskbar {
  display: flex;
  align-items: stretch;
  height: 120px;
  flex: none;
  background: linear-gradient(90deg, #85545e 0%, #84555d 35%, #823c53 55%, #803d52 70%, #80525a 100%);
  border-top: 3px solid #77555f;
  box-sizing: border-box;
}

.task {
  position: relative;
  width: 110px;
  flex: none;
  display: flex;
  align-items: center;
  justify-content: center;
  padding-bottom: 3px;
  box-sizing: border-box;
}

.task svg {
  width: 60px;
  height: 60px;
}

.task-widgets {
  margin-left: 26px;
  margin-right: 384px;
}

.task-group {
  display: flex;
}

.task-active::before {
  content: "";
  position: absolute;
  left: 8px;
  top: 7px;
  width: 97px;
  height: 100px;
  background: rgba(255, 255, 255, 0.13);
  border-radius: 10px;
}

.task-active svg {
  position: relative;
}

.running::after,
.running-wide::after {
  content: "";
  position: absolute;
  left: 50%;
  bottom: 13px;
  width: 15px;
  height: 8px;
  margin-left: -7px;
  background: #d5b5bf;
  border-radius: 4px;
}

.running-wide::after {
  width: 34px;
  margin-left: -17px;
}

.tray {
  display: flex;
  align-items: center;
  margin-left: auto;
  color: #fff;
  font-family: "Noto Sans", sans-serif;
  font-size: 28px;
}

.tray-chevron {
  width: 28px;
  height: 18px;
  margin-right: 49px;
}

.tray-cloud {
  width: 40px;
  height: 30px;
  margin-right: 38px;
}

.tray-lang {
  display: flex;
  flex-direction: column;
  align-items: center;
  width: 70px;
  line-height: 40px;
  margin-right: 29px;
}

.tray-icon {
  width: 60px;
  display: flex;
  justify-content: center;
}

.tray-icon svg {
  width: 40px;
  height: 40px;
}

.clock {
  display: flex;
  flex-direction: column;
  align-items: flex-end;
  margin-left: 32px;
  line-height: 41px;
  font-size: 29.5px;
}

.bell {
  width: 60px;
  margin: 0 39px 0 9px;
  display: flex;
  justify-content: center;
}

.bell svg {
  width: 32px;
  height: 44px;
}

/* Text inside the taskbar pictures */
.teams-t {
  font: bold 24px "Liberation Sans", sans-serif;
  fill: #fff;
  text-anchor: middle;
}

.zoo {
  font: bold 18px "Liberation Serif", serif;
  fill: #f6e2b8;
  text-anchor: middle;
}

.bell-z {
  font: bold 18px "Liberation Sans", sans-serif;
  fill: #7d4a58;
}

.bell-z2 {
  font: bold 13px "Liberation Sans", sans-serif;
  fill: #fff;
}
```
